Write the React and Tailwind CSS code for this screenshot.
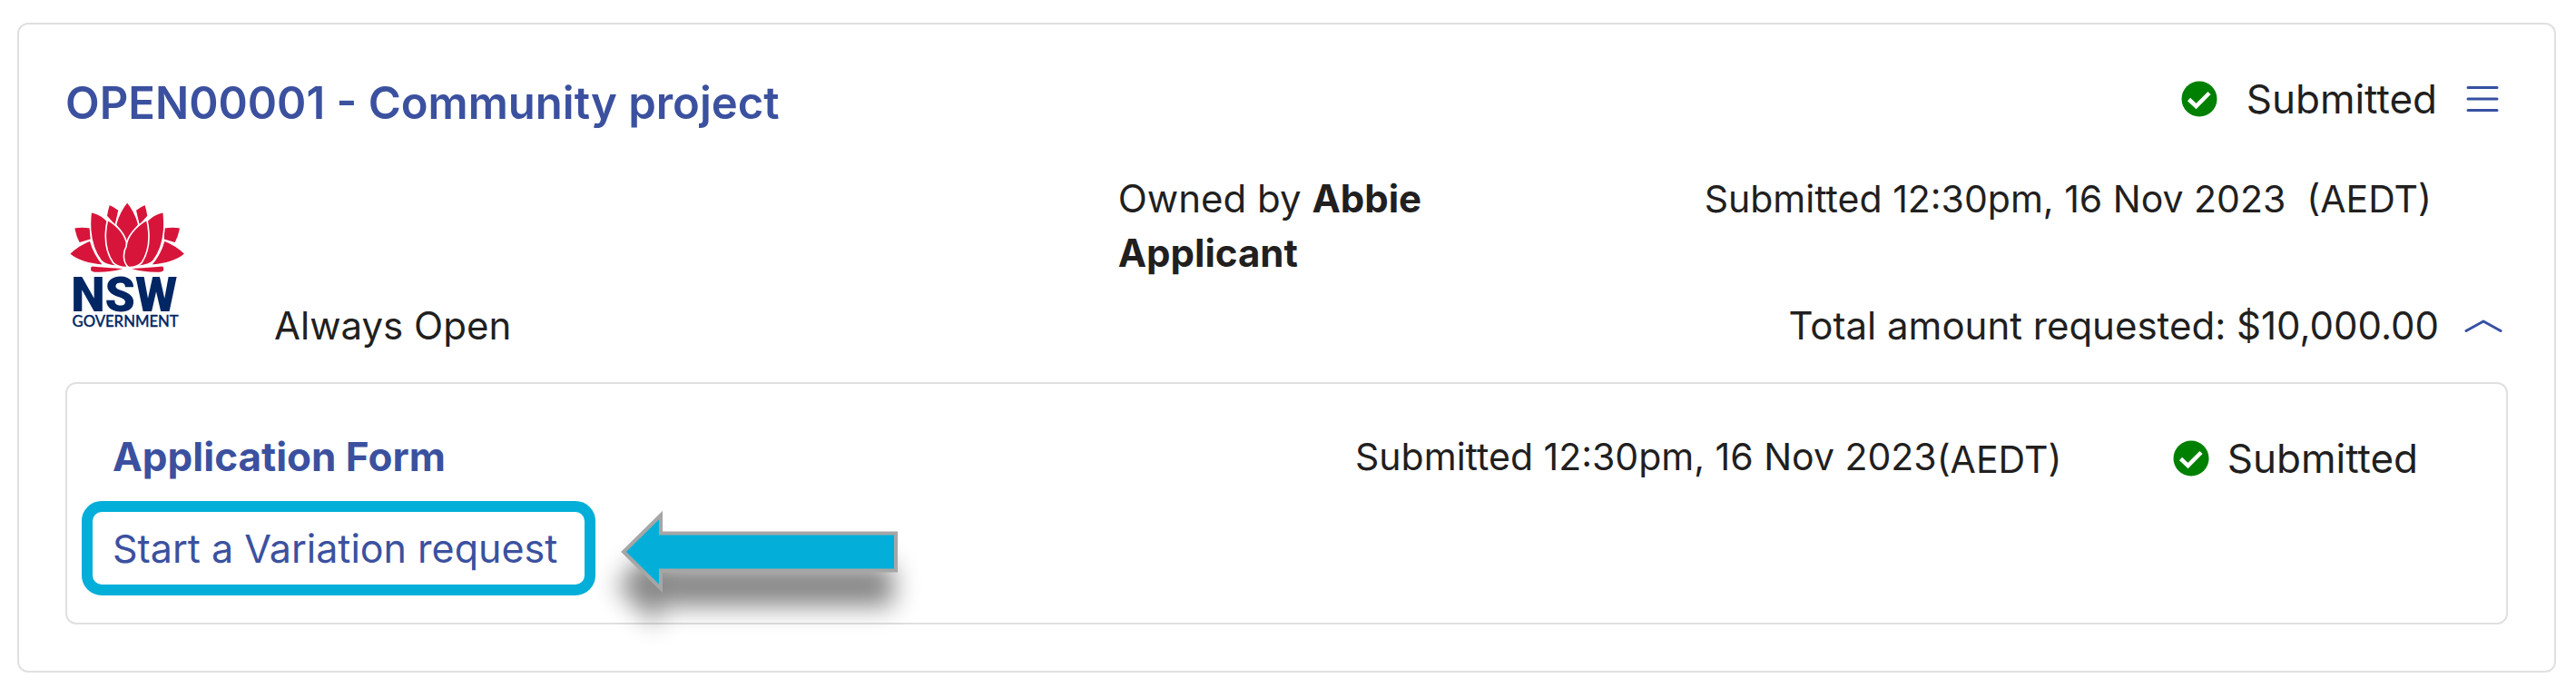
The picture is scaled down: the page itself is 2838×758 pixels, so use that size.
const application = {
  title: 'OPEN00001 - Community project',
  round: 'Always Open',
  owner: 'Abbie Applicant',
  status: 'Submitted',
  submitted: '12:30pm, 16 Nov 2023',
  zone: '(AEDT)',
  total: '$10,000.00',
};

function CheckIcon() {
  return (
    <svg viewBox="0 0 40 40" className="size-10 shrink-0" aria-hidden="true">
      <circle cx="20" cy="20" r="19.5" fill="#008000" />
      <path d="M8.5 20.5 16.5 28 31 13.5" fill="none" stroke="#fff" strokeWidth="4.5" />
    </svg>
  );
}

function MenuIcon() {
  return (
    <svg viewBox="0 0 36 28" className="h-7 w-9" fill="none" stroke="#3650a2" strokeWidth="3" strokeLinecap="round" aria-hidden="true">
      <path d="M2 1.5H34M2 14H34M2 26.5H34" />
    </svg>
  );
}

function ChevronIcon() {
  return (
    <svg viewBox="0 0 42 14" className="h-[14px] w-[42px]" fill="none" stroke="#3650a2" strokeWidth="3" strokeLinecap="round" strokeLinejoin="round" aria-hidden="true">
      <path d="M2 12.5 21 2 40 12.5" />
    </svg>
  );
}

function NswLogo() {
  return (
    <svg viewBox="54 36 380 420" className="h-[140px] w-[127px] overflow-visible" role="img" aria-label="NSW Government">
      <g fill="#d7153a" stroke="#fff" strokeWidth="5" strokeLinejoin="round">
        <path d="M183 45Q201 52 216 64L204 118L174 84Q177 64 183 45Z" />
        <path d="M303 45Q285 52 270 64L282 118L312 84Q309 64 303 45Z" />
        <path d="M67 122Q92 118 122 122L124 162L84 174Q70 148 67 122Z" />
        <path d="M419 122Q394 118 364 122L362 162L402 174Q416 148 419 122Z" />
        <path d="M243 37Q270 70 281 112L243 175L205 112Q216 70 243 37Z" />
        <path d="M121 164Q80 180 51 209Q88 242 166 247Q134 212 121 164Z" />
        <path d="M365 164Q406 180 435 209Q398 242 320 247Q352 212 365 164Z" />
        <path d="M123 70Q158 76 182 105L208 250Q170 247 156 231C122 186 117 124 123 70Z" />
        <path d="M363 70Q328 76 304 105L278 250Q316 247 330 231C364 186 369 124 363 70Z" />
        <path d="M178 96C214 118 239 146 243 184L243 254Q213 255 196 238C170 200 167 146 178 96Z" />
        <path d="M308 96C268 120 241 154 240 184C226 208 231 242 248 254Q276 254 291 238C316 200 319 146 308 96Z" />
      </g>
      <path d="M123 256Q122 249 134 251Q180 255 228 258Q184 271 136 269Q120 269 123 256Z" fill="#d7153a" />
      <path d="M363 256Q364 249 352 251Q306 255 258 258Q302 271 350 269Q366 269 363 256Z" fill="#d7153a" />
      <text x="57" y="399" fontFamily="Roboto" fontWeight="900" fontSize="160" fill="#002664">NSW</text>
      <text x="61" y="450" fontFamily="Lato" fontWeight="500" fontSize="50" fill="#002664" stroke="#002664" strokeWidth="1">GOVERNMENT</text>
    </svg>
  );
}

function PointerArrow() {
  return (
    <svg viewBox="0 0 306 92" className="mt-2 h-[92px] w-[306px] overflow-visible drop-shadow-[-5px_37px_14px_rgba(0,0,0,0.48)]" aria-hidden="true">
      <path d="M3 46 44 5.5V25.5H303V66.5H44V86.5Z" fill="#03afd9" stroke="#a6a6a6" strokeWidth="4" />
    </svg>
  );
}

export default function App() {
  return (
    <main className="bg-white py-[25px] pr-[22px] pl-[19px] font-['Inter',sans-serif] text-[42px] leading-[60px] text-[#221f1f]">
      <section className="rounded-xl border-2 border-[#e0e0e0] px-[51px] pt-[52px] pb-[51px]">
        <header className="flex items-start justify-between">
          <h2 className="text-[49px] leading-[70px] font-semibold text-[#3b519f]">
            <a href="#application">{application.title}</a>
          </h2>
          <div className="flex items-center gap-8 pr-[10px]">
            <CheckIcon />
            <span className="text-[44px]">{application.status}</span>
            <button type="button" aria-label="Application menu"><MenuIcon /></button>
          </div>
        </header>

        <div className="mt-10 grid grid-cols-[230px_929fr_400fr_1130fr] grid-rows-[140px_60px]">
          <div className="row-span-2 pt-[33px] pl-[5px]"><NswLogo /></div>
          <p className="col-start-3">Owned by <strong className="font-bold">{application.owner}</strong></p>
          <p className="pr-[84px] text-right text-[41px]">
            Submitted {application.submitted}&nbsp; {application.zone}
          </p>
          <p className="col-start-2">{application.round}</p>
          <div className="col-start-4 flex items-center justify-end gap-7 pr-[6px]">
            <span>Total amount requested: {application.total}</span>
            <button type="button" aria-label="Hide forms"><ChevronIcon /></button>
          </div>
        </div>

        <section className="mt-8 rounded-xl border-2 border-[#e0e0e0] pt-[50px] pr-[93px] pb-[30px] pl-4">
          <div className="grid grid-cols-[1368fr_900fr_274fr] pl-[34px]">
            <h3 className="text-[44px] font-bold text-[#3b519f]"><a href="#form">Application Form</a></h3>
            <p className="text-[41px]">Submitted {application.submitted}<span className="align-[-3px]">{application.zone}</span></p>
            <div className="flex items-center gap-5">
              <CheckIcon />
              <span className="text-[44px]">{application.status}</span>
            </div>
          </div>
          <div className="mt-4 flex items-center gap-7">
            <a href="#variation" className="rounded-[22px] border-12 border-[#03afd9] py-[10px] pr-[30px] pl-[22px] text-[43px] text-[#3b519f]">Start a Variation request</a>
            <PointerArrow />
          </div>
        </section>
      </section>
    </main>
  );
}
